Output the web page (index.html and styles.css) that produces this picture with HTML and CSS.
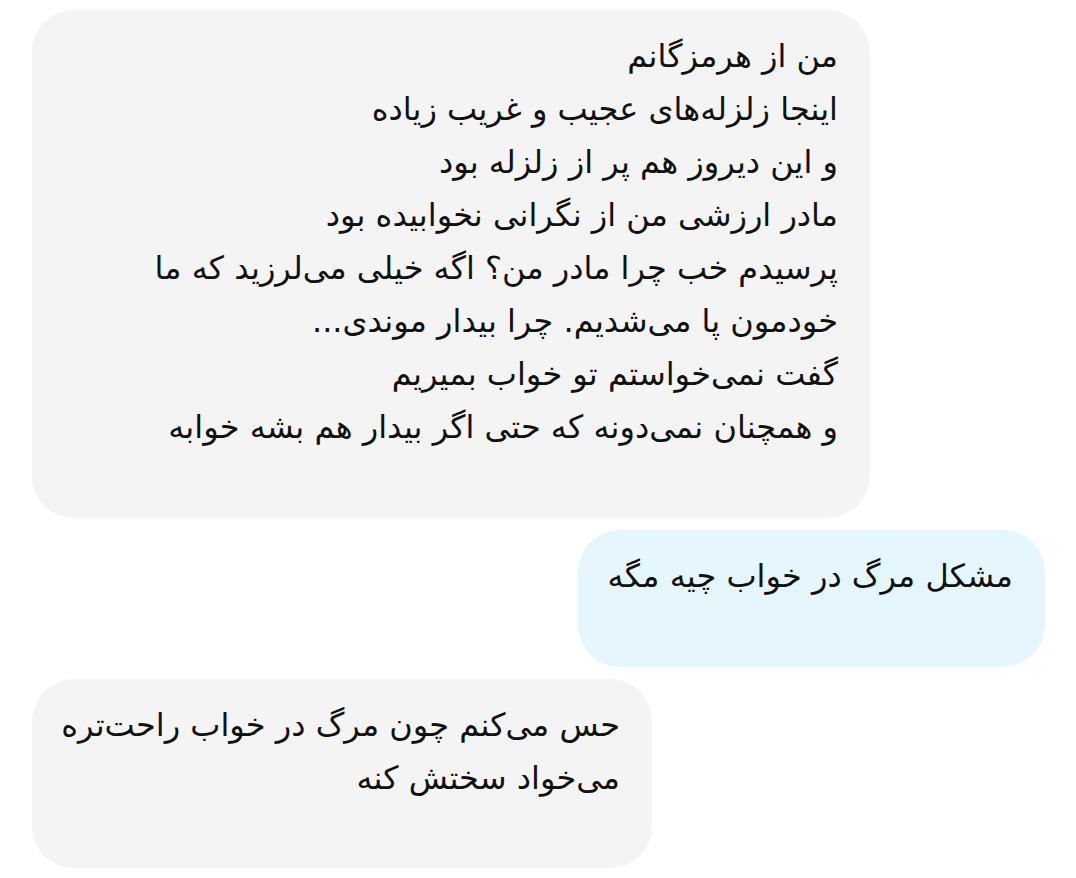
FILE: index.html
```html
<!DOCTYPE html>
<html lang="fa" dir="rtl">
<head>
<meta charset="utf-8">
<link rel="stylesheet" href="styles.css">
</head>
<body>
<div class="chat">
  <div class="bubble in b1">
    <div class="line">من از هرمزگانم</div>
    <div class="line">اینجا زلزله‌های عجیب و غریب زیاده</div>
    <div class="line">و این دیروز هم پر از زلزله بود</div>
    <div class="line">مادر ارزشی من از نگرانی نخوابیده بود</div>
    <div class="line">پرسیدم خب چرا مادر من؟ اگه خیلی می‌لرزید که ما</div>
    <div class="line">خودمون پا می‌شدیم. چرا بیدار موندی...</div>
    <div class="line">گفت نمی‌خواستم تو خواب بمیریم</div>
    <div class="line">و همچنان نمی‌دونه که حتی اگر بیدار هم بشه خوابه</div>
  </div>
  <div class="bubble out b2">
    <div class="line">مشکل مرگ در خواب چیه مگه</div>
  </div>
  <div class="bubble in b3">
    <div class="line">حس می‌کنم چون مرگ در خواب راحت‌تره</div>
    <div class="line">می‌خواد سختش کنه</div>
  </div>
</div>
</body>
</html>
```

FILE: styles.css
```css
html, body {
  margin: 0;
  padding: 0;
  background: #ffffff;
}

body {
  font-family: "DejaVu Sans", "Noto Sans", sans-serif;
  color: #111111;
  width: 1076px;
  height: 878px;
  overflow: hidden;
}

.chat {
  display: flex;
  flex-direction: column;
  gap: 12px;
  padding: 10px 31px 0 32px;
}

.bubble {
  box-sizing: border-box;
  border-radius: 42px;
  padding: 20px 32px 64px 30px;
  font-size: 32px;
  line-height: 53px;
  text-align: right;
}

.line {
  white-space: nowrap;
}

.in {
  background: #f4f4f4;
  align-self: flex-end;
}

.out {
  background: #e6f6fe;
  align-self: flex-start;
}

.b1 {
  width: 838px;
  height: 508px;
}

.b2 {
  width: 467px;
  height: 137px;
}

.b3 {
  width: 620px;
  height: 189px;
}
```
